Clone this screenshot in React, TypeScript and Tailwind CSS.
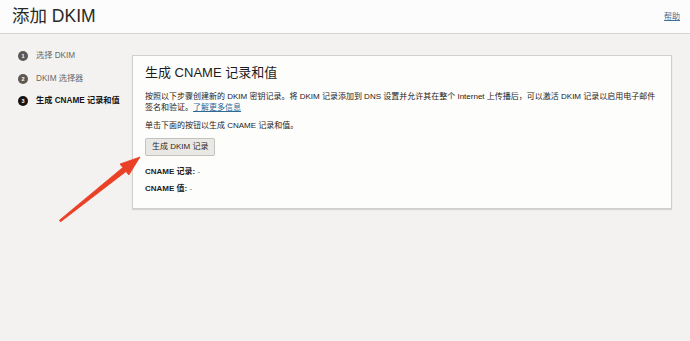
import { FC } from "react";

const font = { fontFamily: '"Liberation Sans", "Noto Sans CJK SC", sans-serif' };

const steps = [
    { n: 1, label: "选择 DKIM", active: false },
    { n: 2, label: "DKIM 选择器", active: false },
    { n: 3, label: "生成 CNAME 记录和值", active: true },
];

const App: FC = () => {
    return (
        <div className="relative min-h-screen bg-[#f3f2f1] text-[#1d1c1b]" style={font}>
            <header className="flex h-[34px] items-center justify-between border-b border-[#d6d4d0] bg-[#fcfcfc] pl-3 pr-[10px]">
                <h1 className="text-[17.5px] leading-none font-normal text-[#2a2927]">添加 DKIM</h1>
                <a href="#" className="text-[8px] text-[#3e6f96] underline">帮助</a>
            </header>

            <div className="flex pr-[18px]">
                <nav className="w-[132px] shrink-0 pt-[11px] pl-[18px]">
                    {steps.map((s) => (
                        <div key={s.n} className="flex h-[22.5px] items-center gap-[8px]">
                            <span
                                className={
                                    s.active
                                        ? "flex h-[10px] w-[10px] items-center justify-center rounded-full bg-[#161513] text-[5.5px] font-bold text-white"
                                        : "flex h-[10px] w-[10px] items-center justify-center rounded-full bg-[#5c5853] text-[5.5px] font-bold text-white"
                                }
                            >
                                {s.n}
                            </span>
                            <span
                                className={
                                    s.active
                                        ? "text-[8.2px] font-bold text-[#161513]"
                                        : "text-[8.2px] text-[#6b6864]"
                                }
                            >
                                {s.label}
                            </span>
                        </div>
                    ))}
                </nav>

                <section className="mt-[21px] flex-1 border border-[#d2d0cc] bg-[#fdfdfc] px-[12px] pt-[9px] pb-[14px] shadow-[0_1px_1px_rgba(0,0,0,0.12)]">
                    <h2 className="text-[13px] leading-[16px] font-normal text-[#1d1c1b]">生成 CNAME 记录和值</h2>
                    <p className="mt-[10px] text-[8px] leading-[11px]">
                        按照以下步骤创建新的 DKIM 密钥记录。将 DKIM 记录添加到 DNS 设置并允许其在整个 Internet 上传播后，可以激活 DKIM 记录以启用电子邮件
                        <br />
                        签名和验证。<a href="#" className="text-[#2f6a96] underline">了解更多信息</a>
                    </p>
                    <p className="mt-[7px] text-[8px] leading-[11px]">单击下面的按钮以生成 CNAME 记录和值。</p>
                    <button className="mt-[7px] h-[18px] rounded-[2px] border border-[#c4c2be] bg-[#e9e8e5] px-[6px] text-[8px] leading-none text-[#2a2927]">
                        生成 DKIM 记录
                    </button>
                    <p className="mt-[10px] text-[8px] leading-[11px] font-bold">
                        CNAME 记录: <span className="font-normal text-[#6b6864]">-</span>
                    </p>
                    <p className="mt-[6px] text-[8px] leading-[11px] font-bold">
                        CNAME 值: <span className="font-normal text-[#6b6864]">-</span>
                    </p>
                </section>
            </div>

            <svg className="pointer-events-none absolute left-0 top-0" width="690" height="341">
                <polygon
                    points="59.4,220.2 122.8,167.5 120,164 140,157 128.8,175 126,171.5 60.6,221.8"
                    fill="#ea4026"
                    stroke="#ea4026"
                    strokeWidth="0.8"
                    strokeLinejoin="round"
                />
            </svg>
        </div>
    );
};

export default App;
